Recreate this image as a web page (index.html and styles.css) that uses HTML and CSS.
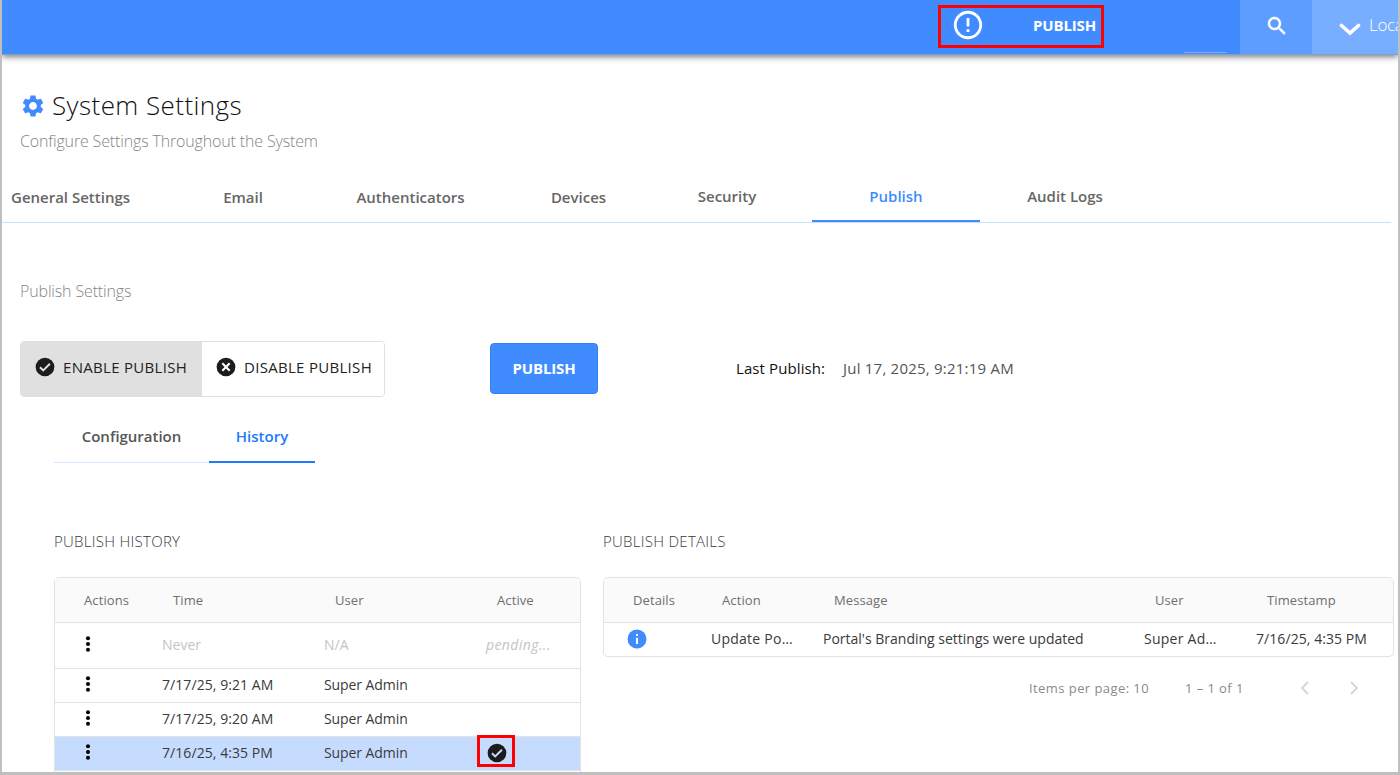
FILE: index.html
```html
<!DOCTYPE html>
<html lang="en">
<head>
  <meta charset="UTF-8">
  <title>System Settings</title>
  <link rel="stylesheet" href="styles.css">
</head>
<body>

  <div class="page">
    <header class="topbar">
      <div class="alert">
        <svg width="34" height="34" viewBox="0 0 24 24" fill="#fff"><path d="M11 15h2v2h-2zm0-8h2v6h-2zm.99-5C6.47 2 2 6.48 2 12s4.47 10 9.99 10C17.52 22 22 17.52 22 12S17.52 2 11.99 2zM12 20c-4.42 0-8-3.58-8-8s3.58-8 8-8 8 3.58 8 8-3.58 8-8 8z"/></svg>
        <span class="alert-text">PUBLISH</span>
      </div>
      <div class="underline"></div>
      <div class="search">
        <svg width="24" height="24" viewBox="0 0 24 24" fill="#fff"><path stroke="#fff" stroke-width=".5" d="M15.5 14h-.79l-.28-.27C15.41 12.59 16 11.11 16 9.5 16 5.91 13.09 3 9.5 3S3 5.91 3 9.5 5.91 16 9.5 16c1.61 0 3.09-.59 4.23-1.57l.27.28v.79l5 4.99L20.49 19l-4.99-5zm-6 0C7.01 14 5 11.99 5 9.5S7.01 5 9.5 5 14 7.01 14 9.5 11.99 14 9.5 14z"/></svg>
      </div>
      <div class="account">
        <svg width="22" height="14" viewBox="0 0 22 14" fill="none" stroke="#fff" stroke-width="3.6" stroke-linecap="round" stroke-linejoin="miter"><path d="M2.5 2.5L11 10l8.500-7.500"/></svg>
        <span class="account-text">Loca</span>
      </div>
    </header>

    <main>
      <h1 class="title">
        <svg width="26" height="26" viewBox="0 0 24 24" fill="#408cff"><path d="M19.140 12.940c.04-.3.060-.61.060-.94s-.02-.64-.07-.94l2.030-1.580c.18-.14.230-.41.120-.61l-1.920-3.320c-.12-.22-.37-.29-.59-.22l-2.390.96c-.5-.38-1.030-.7-1.620-.94l-.36-2.540c-.04-.24-.24-.41-.48-.41h-3.840c-.24 0-.43.170-.47.410l-.36 2.540c-.59.240-1.130.570-1.620.940l-2.390-.96c-.22-.08-.47 0-.59.220L2.740 8.870c-.12.210-.08.470.120.610l2.030 1.580c-.05.3-.09.630-.09.940s.02.640.070.940l-2.030 1.580c-.18.140-.23.410-.12.610l1.920 3.320c.12.220.370.290.590.220l2.390-.96c.5.380 1.030.7 1.620.940l.36 2.540c.05.240.240.410.480.410h3.840c.24 0 .44-.17.470-.41l.36-2.540c.59-.24 1.130-.56 1.620-.94l2.390.96c.22.080.470 0 .590-.22l1.920-3.320c.12-.22.070-.47-.12-.61l-2.010-1.580zM12 15.600c-1.980 0-3.600-1.620-3.600-3.600s1.620-3.600 3.600-3.600 3.600 1.620 3.600 3.600-1.620 3.600-3.600 3.600z"/></svg>
        <span class="title-text">System Settings</span>
      </h1>
      <p class="subtitle">Configure Settings Throughout the System</p>

      <nav class="tabs">
        <a class="tab tab-general">General Settings</a>
        <a class="tab tab-email">Email</a>
        <a class="tab tab-auth">Authenticators</a>
        <a class="tab tab-devices">Devices</a>
        <a class="tab tab-security">Security</a>
        <a class="tab tab-publish active">Publish</a>
        <a class="tab tab-audit">Audit Logs</a>
      </nav>

      <p class="section-name">Publish Settings</p>

      <div class="controls">
        <div class="toggle">
          <button type="button" class="toggle-on">
            <svg width="22" height="22" viewBox="0 0 24 24"><circle cx="12" cy="12" r="10.200" fill="#1c1c1c"/><path d="M6.500 12.300l3.500 3.500 7.400-7.400" fill="none" stroke="#e0e0e0" stroke-width="2.100"/></svg>
            <span class="toggle-text">ENABLE PUBLISH</span>
          </button>
          <button type="button" class="toggle-off">
            <svg width="22" height="22" viewBox="0 0 24 24"><circle cx="12" cy="12" r="10.200" fill="#1c1c1c"/><path d="M8 8l8 8M16 8l-8 8" fill="none" stroke="#fff" stroke-width="2.300"/></svg>
            <span class="toggle-text">DISABLE PUBLISH</span>
          </button>
        </div>
        <button type="button" class="publish">PUBLISH</button>
        <div class="last">
          <span class="last-label">Last Publish:</span>
          <span class="last-date">Jul 17, 2025, 9:21:19 AM</span>
        </div>
      </div>

      <nav class="subtabs">
        <a class="subtab">Configuration</a>
        <a class="subtab active">History</a>
      </nav>

      <div class="panels">
        <section class="history">
          <h2 class="panel-title">PUBLISH HISTORY</h2>
          <div class="table">
            <div class="row head">
              <span>Actions</span><span>Time</span><span>User</span><span>Active</span>
            </div>
            <div class="row pending">
              <span class="menu"><svg width="6" height="16" viewBox="0 0 6 16"><circle cx="3" cy="2.300" r="2"/><circle cx="3" cy="8" r="2"/><circle cx="3" cy="13.700" r="2"/></svg></span>
              <span>Never</span><span>N/A</span><em class="wait">pending...</em>
            </div>
            <div class="row">
              <span class="menu"><svg width="6" height="16" viewBox="0 0 6 16"><circle cx="3" cy="2.300" r="2"/><circle cx="3" cy="8" r="2"/><circle cx="3" cy="13.700" r="2"/></svg></span>
              <span class="date">7/17/25, 9:21 AM</span><span class="user">Super Admin</span><span></span>
            </div>
            <div class="row">
              <span class="menu"><svg width="6" height="16" viewBox="0 0 6 16"><circle cx="3" cy="2.300" r="2"/><circle cx="3" cy="8" r="2"/><circle cx="3" cy="13.700" r="2"/></svg></span>
              <span class="date">7/17/25, 9:20 AM</span><span class="user">Super Admin</span><span></span>
            </div>
            <div class="row selected">
              <span class="menu"><svg width="6" height="16" viewBox="0 0 6 16"><circle cx="3" cy="2.300" r="2"/><circle cx="3" cy="8" r="2"/><circle cx="3" cy="13.700" r="2"/></svg></span>
              <span class="date">7/16/25, 4:35 PM</span><span class="user">Super Admin</span>
              <span class="check"><svg width="22" height="22" viewBox="0 0 24 24"><circle cx="12" cy="12" r="10.200" fill="#1c1c1c"/><path d="M6.500 12.300l3.500 3.500 7.400-7.400" fill="none" stroke="#c6dcff" stroke-width="2.100"/></svg></span>
            </div>
          </div>
        </section>

        <section class="details">
          <h2 class="panel-title">PUBLISH DETAILS</h2>
          <div class="table">
            <div class="row head">
              <span>Details</span><span>Action</span><span>Message</span><span>User</span><span>Timestamp</span>
            </div>
            <div class="row">
              <span class="info"><svg width="20" height="20" viewBox="0 0 20 20"><circle cx="10" cy="10" r="9.500" fill="#408cff"/><path d="M9 5h2v2H9zM9 8.700h2V15H9z" fill="#fff"/></svg></span>
              <span class="action">Update Po…</span><span>Portal's Branding settings were updated</span><span class="action">Super Ad…</span><span class="date">7/16/25, 4:35 PM</span>
            </div>
          </div>
          <div class="pager">
            <span class="per-page">Items per page: 10</span>
            <span class="range">1 – 1 of 1</span>
            <svg class="prev" width="10" height="14" viewBox="0 0 10 14"><path d="M8 1L2 7l6 6" fill="none" stroke="#d6d6d6" stroke-width="2"/></svg>
            <svg class="next" width="10" height="14" viewBox="0 0 10 14"><path d="M2 1l6 6-6 6" fill="none" stroke="#d6d6d6" stroke-width="2"/></svg>
          </div>
        </section>
      </div>
    </main>

    <div class="mark mark-alert"></div>
    <div class="mark mark-check"></div>
  </div>

</body>
</html>
```
FILE: styles.css
```css
* {
  box-sizing: border-box;
}
body {
  margin: 0;
  font-family: "Open Sans", "Noto Sans", sans-serif;
  color: #3a3a3a;
}
h1, h2, p {
  margin: 0;
  font-weight: 300;
}
button {
  font-family: inherit;
  padding: 0;
  border: 0;
}
svg {
  display: block;
  flex: none;
}
span, em, a, p {
  white-space: nowrap;
}
.page {
  position: relative;
  width: 1400px;
  height: 775px;
  overflow: hidden;
  background: #fff;
  border: solid #bfbfbf;
  border-width: 0 2px 3px 2px;
}

/* top bar */
.topbar {
  display: flex;
  height: 55px;
  background: #408cff;
  border-bottom: 1px solid #7f9fd3;
  box-shadow: 0 2px 6px rgba(0, 0, 0, .5);
}
.alert {
  display: flex;
  align-items: center;
  width: 247px;
  height: 50px;
  margin-left: 935px;
  padding-left: 14px;
}
.alert-text {
  margin: -1px 0 0 48px;
  font-size: 15px;
  font-weight: 700;
  letter-spacing: -.15px;
  line-height: 22px;
  color: #fff;
}
.underline {
  width: 43px;
  height: 1px;
  margin-top: 52px;
  background: #8ba8e8;
}
.search {
  width: 72px;
  margin-left: 13px;
  padding: 14px 0 0 25px;
  background: #5c9dff;
}
.account {
  display: flex;
  flex: 1;
  overflow: hidden;
  padding-left: 27px;
  background: #78aeff;
}
.account svg {
  margin-top: 23px;
}
.account-text {
  margin: 13px 0 0 8px;
  font-size: 17px;
  font-weight: 300;
  letter-spacing: -.3px;
  line-height: 24px;
  color: #fff;
}

/* page title */
.title {
  display: flex;
  align-items: center;
  height: 36px;
  margin: 32px 0 0 18px;
  font-size: 26px;
  letter-spacing: .43px;
  color: #111;
}
.title svg {
  margin-top: 1px;
}
.title-text {
  margin-left: 6px;
}
.subtitle, .section-name {
  height: 24px;
  margin-left: 18px;
  font-size: 16px;
  letter-spacing: -.15px;
  line-height: 24px;
  color: #858585;
}
.subtitle {
  margin-top: 6px;
}
.section-name {
  margin-top: 56px;
}

/* main tabs */
.tabs {
  display: flex;
  width: 1389px;
  height: 50px;
  margin-top: 20px;
  border-bottom: 1px solid #c9dfff;
}
.tab {
  height: 49px;
  padding-top: 13px;
  font-size: 15px;
  font-weight: 600;
  line-height: 22px;
  text-align: center;
  color: #666;
}
.tab-general {
  width: 178px;
  padding-left: 9px;
  text-align: left;
}
.tab-email {
  width: 126px;
}
.tab-auth {
  width: 209px;
}
.tab-devices {
  width: 127px;
}
.tab-security, .tab-audit {
  width: 170px;
}
.tab-publish {
  width: 168px;
}
.tab-security, .tab-publish, .tab-audit {
  padding-top: 12px;
}
.tab.active {
  color: #408cff;
  border-bottom: 2px solid #408cff;
}

/* publish controls */
.controls {
  display: flex;
  height: 56px;
  margin: 38px 0 0 18px;
}
.toggle {
  display: flex;
  width: 365px;
  border: 1px solid #e0e0e0;
  border-radius: 4px;
  overflow: hidden;
}
.toggle button {
  display: flex;
  align-items: center;
  padding: 0 0 4px 13px;
  font-size: 15px;
  letter-spacing: .3px;
  color: #222;
}
.toggle .toggle-on {
  width: 181px;
  background: #e0e0e0;
}
.toggle .toggle-off {
  flex: 1;
  background: #fff;
}
.toggle-text {
  margin-left: 7px;
}
.publish {
  width: 108px;
  height: 51px;
  margin: 2px 0 0 105px;
  padding-bottom: 2px;
  border: 1px solid #2f80fb;
  border-radius: 4px;
  background: #408cff;
  font-size: 15px;
  font-weight: 700;
  letter-spacing: -.15px;
  color: #fff;
}
.last {
  display: flex;
  margin-left: 138px;
  font-size: 15px;
  line-height: 54px;
}
.last-label {
  width: 107px;
  letter-spacing: .1px;
  color: #111;
}
.last-date {
  letter-spacing: .22px;
  color: #555;
}

/* inner tabs */
.subtabs {
  display: flex;
  width: 261px;
  height: 49px;
  margin: 17px 0 0 52px;
  border-bottom: 1px solid #d5e6ff;
}
.subtab {
  width: 155px;
  height: 49px;
  padding-top: 11px;
  font-size: 15px;
  font-weight: 600;
  line-height: 22px;
  text-align: center;
  color: #555;
}
.subtab.active {
  width: 106px;
  color: #2079ff;
  border-bottom: 2px solid #2079ff;
}

/* tables */
.panels {
  display: flex;
  gap: 22px;
  margin: 66px 0 0 52px;
}
.history {
  width: 527px;
}
.details {
  width: 791px;
}
.panel-title {
  height: 24px;
  font-size: 15px;
  letter-spacing: .27px;
  line-height: 24px;
}
.table {
  margin-top: 24px;
  border: 1px solid #e2e2e2;
  border-radius: 5px;
  overflow: hidden;
}
.history .table {
  height: 240px;
}
.row {
  display: grid;
  grid-template-columns: 107px 162px 162px 1fr;
  align-items: center;
  height: 34px;
  padding-bottom: 2px;
  border-bottom: 1px solid #e2e2e2;
  font-size: 14px;
}
.details .row {
  grid-template-columns: 107px 112px 321px 112px 1fr;
}
.details .row:last-child {
  height: 33px;
  border-bottom: 0;
}
.row.head {
  height: 45px;
  padding-bottom: 0;
  background: #fafafa;
  font-size: 13px;
  letter-spacing: .1px;
  color: #6f6f6f;
}
.head span {
  padding-left: 11px;
}
.head span:first-child {
  padding-left: 29px;
}
.row.pending {
  height: 46px;
  color: #c4c4c4;
}
.row.selected {
  background: #c6dcff;
}
.wait {
  letter-spacing: .4px;
}
.date {
  letter-spacing: .07px;
}
.user {
  letter-spacing: -.08px;
}
.action {
  letter-spacing: .25px;
}
.menu {
  padding: 0 0 1px 30px;
}
.info {
  padding-left: 23px;
}

/* pager */
.pager {
  display: flex;
  align-items: center;
  height: 24px;
  margin-top: 19px;
  padding-left: 426px;
  font-size: 13px;
  letter-spacing: .43px;
  color: #8a8a8a;
}
.per-page {
  width: 156px;
}
.range {
  width: 115px;
}
.prev {
  margin-right: 39px;
}

/* red boxes over the page */
.mark {
  position: absolute;
  border: 3px solid #f00;
}
.mark-alert {
  left: 936px;
  top: 5px;
  width: 166px;
  height: 43px;
}
.mark-check {
  left: 475px;
  top: 735px;
  width: 38px;
  height: 32px;
}
```
